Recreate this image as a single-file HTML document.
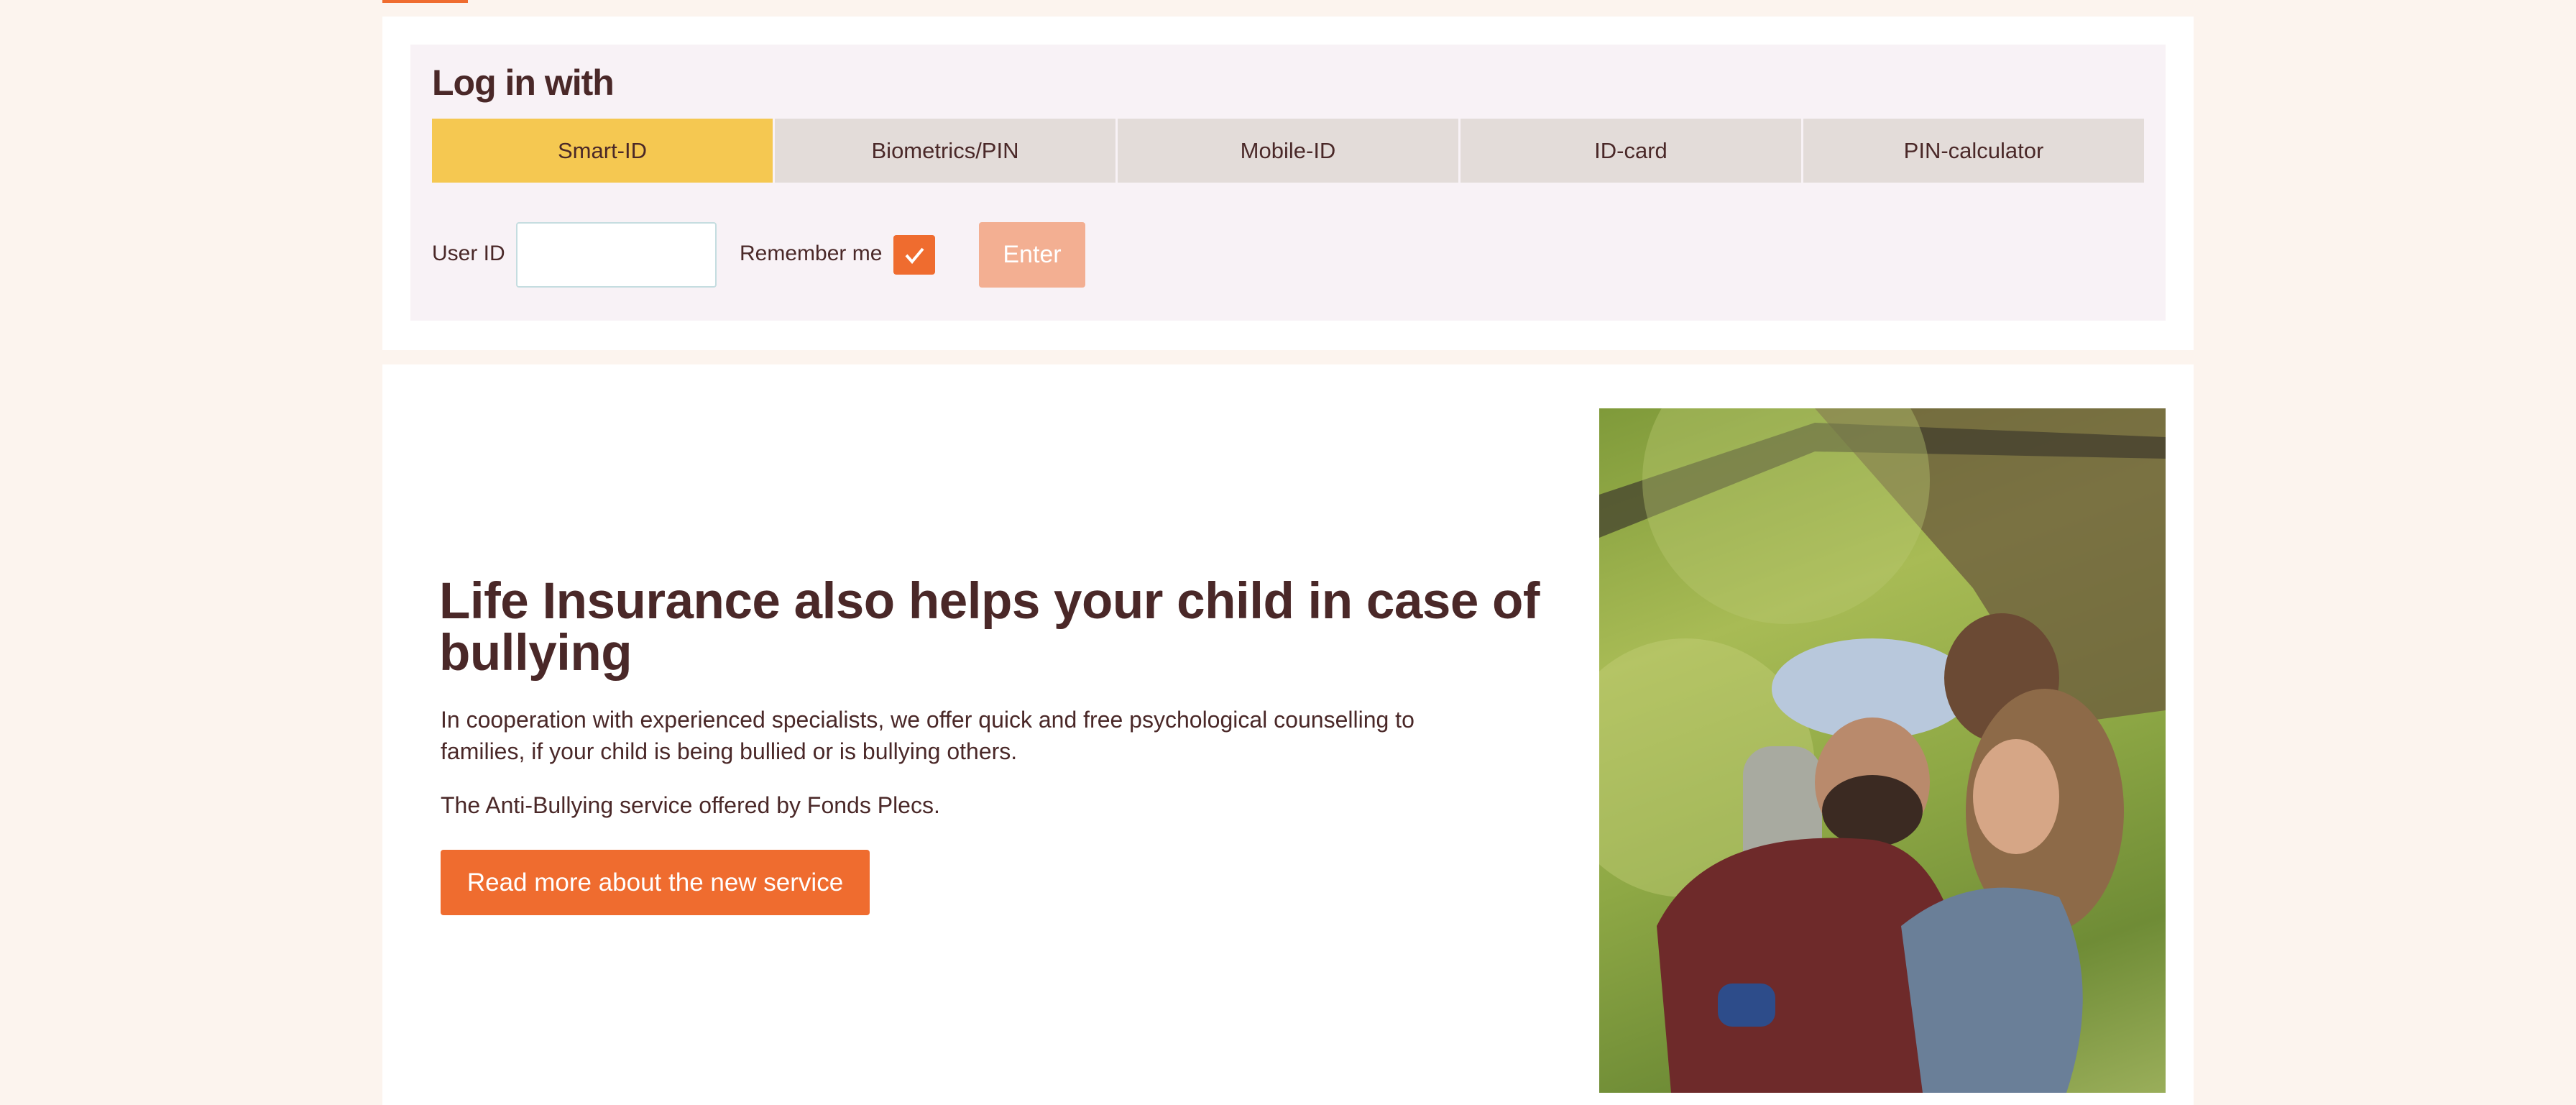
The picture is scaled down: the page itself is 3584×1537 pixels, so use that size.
<!DOCTYPE html>
<html><head><meta charset="utf-8"><style>
*{box-sizing:border-box;margin:0;padding:0}
body{width:3584px;height:1528px;background:#fcf4ee;font-family:"Liberation Sans",sans-serif;color:#4a2828;position:relative;overflow:hidden}
.bar{position:absolute;left:532px;top:0;width:119px;height:4px;background:#ef6c2f}
.card{position:absolute;background:#fff;left:532px;width:2520px}
.panel{position:absolute;left:571px;top:62px;width:2442px;height:384px;background:#f8f2f6}
h2{position:absolute;left:601px;top:86px;font-size:50px;font-weight:bold;letter-spacing:-1px}
.tabs{position:absolute;left:601px;top:165px;width:2382px;height:89px;display:flex;gap:3px}
.tab{flex:1;background:#e3dcd9;display:flex;align-items:center;justify-content:center;font-size:31px}
.tab.on{background:#f5c851}
.lbl{position:absolute;font-size:30px;top:336px}
.inp{position:absolute;left:718px;top:309px;width:279px;height:91px;background:#fff;border:2px solid #c5dde0;border-radius:4px}
.chk{position:absolute;left:1243px;top:327px;width:58px;height:55px;background:#ef6c2f;border-radius:4px}
.enter{position:absolute;left:1362px;top:309px;width:148px;height:91px;background:#f3af92;border-radius:4px;color:#fff;font-size:34px;display:flex;align-items:center;justify-content:center}
h1{position:absolute;left:611px;top:801px;width:1580px;font-size:71px;line-height:72px;font-weight:bold;letter-spacing:-0.5px}
.p{position:absolute;left:613px;font-size:32px;line-height:44px;width:1470px}
.btn{position:absolute;left:613px;top:1182px;width:597px;height:91px;background:#ef6c2f;border-radius:4px;color:#fff;font-size:35px;display:flex;align-items:center;justify-content:center}
.img{position:absolute;left:2225px;top:568px;width:788px;height:952px;overflow:hidden;background:linear-gradient(160deg,#7f9a3a 0%,#a8bb55 30%,#8ea845 55%,#6f8c36 80%,#9aae5a 100%)}
</style></head><body>
<div class="bar"></div>
<div class="card" style="top:23px;height:464px"></div>
<div class="panel"></div>
<h2>Log in with</h2>
<div class="tabs"><div class="tab on">Smart-ID</div><div class="tab">Biometrics/PIN</div><div class="tab">Mobile-ID</div><div class="tab">ID-card</div><div class="tab">PIN-calculator</div></div>
<div class="lbl" style="left:601px">User ID</div>
<div class="inp"></div>
<div class="lbl" style="left:1029px">Remember me</div>
<div class="chk"><svg width="58" height="55" viewBox="0 0 58 55"><path d="M18 28l8 9 15-18" fill="none" stroke="#fff" stroke-width="4"/></svg></div>
<div class="enter">Enter</div>
<div class="card" style="top:507px;height:1030px"></div>
<h1>Life Insurance also helps your child in case of bullying</h1>
<div class="p" style="top:979px">In cooperation with experienced specialists, we offer quick and free psychological counselling to families, if your child is being bullied or is bullying others.</div>
<div class="p" style="top:1098px">The Anti-Bullying service offered by Fonds Plecs.</div>
<div class="btn">Read more about the new service</div>
<div class="img"><svg width="788" height="952" viewBox="0 0 788 952">
<polygon points="300,0 788,0 788,420 640,440 520,250" fill="#6b5a3c" opacity=".75"/>
<polygon points="0,120 300,20 788,40 788,70 300,60 0,180" fill="#3f3a2c" opacity=".7"/>
<circle cx="260" cy="100" r="200" fill="#b9c870" opacity=".4"/>
<circle cx="120" cy="500" r="180" fill="#c8d27c" opacity=".4"/>
<ellipse cx="380" cy="390" rx="140" ry="70" fill="#b8c8dc"/>
<rect x="200" y="470" width="110" height="280" rx="40" fill="#a8aaa0"/>
<ellipse cx="560" cy="375" rx="80" ry="90" fill="#6b4a34"/>
<ellipse cx="380" cy="520" rx="80" ry="90" fill="#b98a6c"/>
<ellipse cx="380" cy="560" rx="70" ry="50" fill="#3b2a22"/>
<path d="M80 720 Q150 580 380 600 Q520 620 520 952 L100 952 Z" fill="#6e2a2a"/>
<ellipse cx="620" cy="560" rx="110" ry="170" fill="#8d6a48"/>
<ellipse cx="580" cy="540" rx="60" ry="80" fill="#d6a686"/>
<path d="M420 720 Q520 640 640 680 Q700 800 650 952 L450 952 Z" fill="#6a7f98"/>
<rect x="165" y="800" width="80" height="60" rx="20" fill="#2d4c8a"/>
</svg></div>
</body></html>
